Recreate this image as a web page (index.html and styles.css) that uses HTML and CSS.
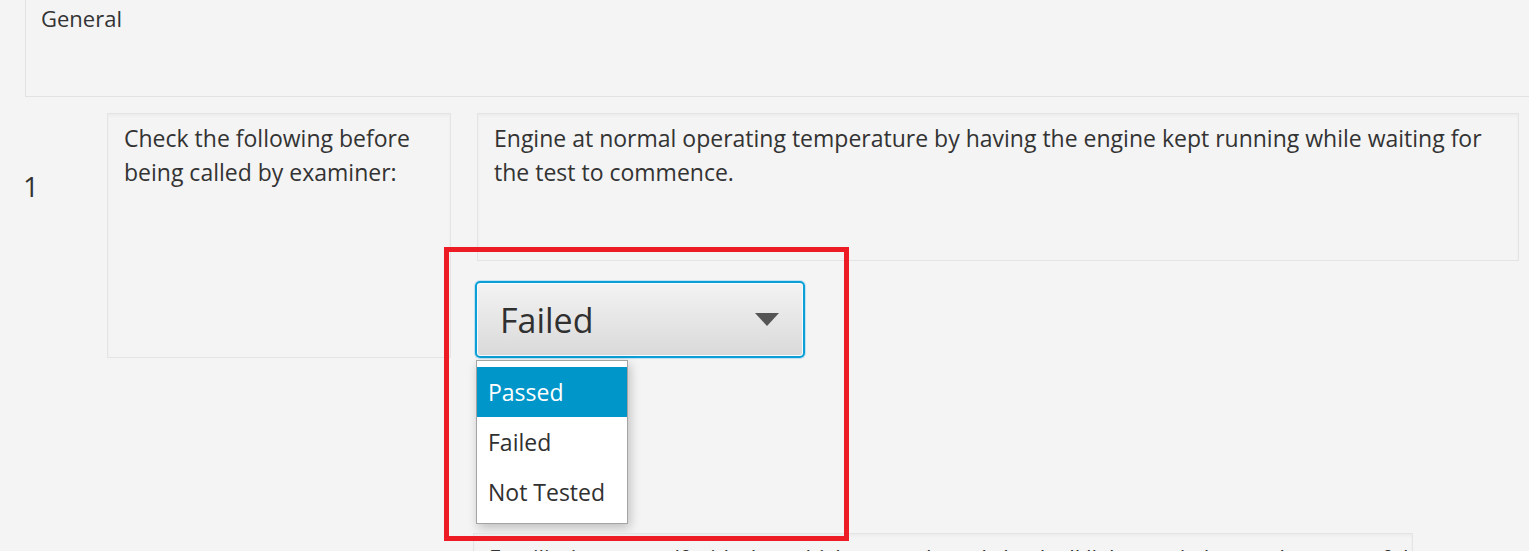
FILE: index.html
```html
<!DOCTYPE html>
<html>
<head>
<meta charset="utf-8">
<link rel="stylesheet" href="styles.css">
</head>
<body>
<div class="page">
  <div class="section">
    <div class="section-title">General</div>
  </div>

  <div class="row">
    <div class="num">1</div>
    <div class="cell item">Check the following before being called by examiner:</div>
    <div class="col">
      <div class="cell desc">Engine at normal operating temperature by having the engine kept running while waiting for the test to commence.</div>
      <div class="combo-wrap">
        <div class="combo">
          <span class="combo-value">Failed</span>
          <svg class="combo-arrow" width="24" height="14" viewBox="0 0 24 14"><path d="M0 0 H24 L12 13 Z" fill="#555"/></svg>
        </div>
        <ul class="menu">
          <li class="menu-item selected">Passed</li>
          <li class="menu-item">Failed</li>
          <li class="menu-item">Not Tested</li>
        </ul>
      </div>
    </div>
  </div>

  <div class="cell next">Familiarise yourself with the vehicle controls and check all lights, switches and gauges of the car.</div>

  <div class="annotation"></div>
</div>
</body>
</html>
```

FILE: styles.css
```css
html, body {
  margin: 0;
  padding: 0;
  background: #f4f4f4;
  overflow: hidden;
}
body {
  font-family: "Open Sans", "Noto Sans", sans-serif;
  color: #333333;
  font-size: 23px;
}
.page {
  position: relative;
  width: 1529px;
  height: 551px;
  overflow: hidden;
}
.section {
  margin-left: 25px;
  border-left: 1px solid #e2e2e2;
  border-bottom: 1px solid #e2e2e2;
  box-sizing: border-box;
  height: 97px;
}
.section-title {
  padding-left: 15px;
  padding-top: 2px;
  font-size: 22px;
  line-height: 32px;
}
.row {
  display: grid;
  grid-template-columns: 82px 344px 1068px;
  margin-left: 25px;
  margin-top: 16px;
  align-items: start;
}
.num {
  padding-top: 58px;
  margin-left: -2px;
  font-size: 28px;
  line-height: 30px;
}
.cell {
  border: 1px solid #e4e4e4;
  box-shadow: inset 0 2px 3px rgba(0, 0, 0, 0.035);
  background: #f4f4f4;
  box-sizing: border-box;
  padding: 7px 16px;
  line-height: 34px;
}
.item {
  height: 245px;
}
.desc {
  height: 148px;
}
.col {
  display: flex;
  flex-direction: column;
  margin-left: 26px;
}
.combo-wrap {
  position: relative;
  margin-top: 20px;
  margin-left: -2px;
  width: 330px;
}
.combo {
  box-sizing: border-box;
  width: 330px;
  height: 77px;
  border: 2px solid #0b9fd6;
  border-radius: 5px;
  box-shadow: 0 0 0 1px #bfe3f2, inset 0 0 0 1px #f7fbfd;
  background: linear-gradient(#f3f3f3, #d9d9d9);
  display: flex;
  align-items: center;
  justify-content: space-between;
  padding: 0 24px 0 23px;
}
.combo-value {
  font-size: 34px;
  color: #303030;
}
.combo-arrow {
  display: block;
}
.menu {
  position: absolute;
  top: 79px;
  left: 1px;
  width: 152px;
  height: 164px;
  margin: 0;
  padding: 6px 0 0;
  list-style: none;
  background: #ffffff;
  border: 1px solid #a4a4a4;
  box-sizing: border-box;
  box-shadow: 2px 4px 10px rgba(0, 0, 0, 0.22);
}
.menu-item {
  height: 50px;
  line-height: 50px;
  padding-left: 11px;
  font-size: 23px;
  color: #303030;
}
.menu-item.selected {
  background: #0096c9;
  color: #ffffff;
}
.next {
  position: absolute;
  left: 473px;
  top: 533px;
  width: 940px;
  height: 60px;
  padding: 6px 15px;
  white-space: nowrap;
  overflow: hidden;
  font-size: 22px;
}
.annotation {
  position: absolute;
  left: 444px;
  top: 247px;
  width: 405px;
  height: 294px;
  box-sizing: border-box;
  border: 5px solid #ed1c24;
}
```
